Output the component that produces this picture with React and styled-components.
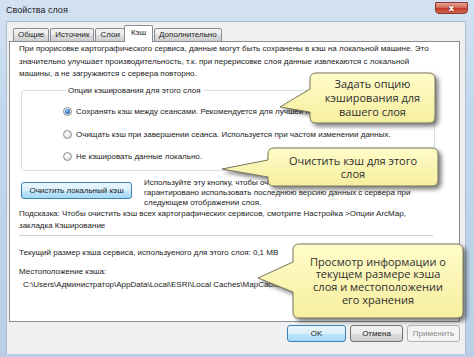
import React from "react";
import styled, { createGlobalStyle } from "styled-components";

const GlobalStyle = createGlobalStyle`
  html, body {
    margin: 0;
    padding: 0;
    background: #ffffff;
  }
  body {
    font-family: "Liberation Sans", Arial, sans-serif;
    color: #222;
  }
`;

const Window = styled.div`
  position: relative;
  width: 474px;
  height: 357px;
  overflow: hidden;
  box-sizing: border-box;
  display: flex;
  flex-direction: column;
  padding: 0 0 3px 6px;
  background: linear-gradient(180deg, #d3e2f2 0%, #c3d7ec 30%, #b9cfe7 100%);
`;

const TitleBar = styled.div`
  height: 21px;
  display: flex;
  justify-content: space-between;
  align-items: flex-start;
`;

const Title = styled.div`
  font-size: 9px;
  line-height: 9px;
  margin-top: 6px;
  color: #1b1b1b;
`;

const CloseButton = styled.div`
  width: 33px;
  height: 12px;
  margin-top: 2px;
  margin-right: 6px;
  box-sizing: border-box;
  border: 1px solid #8a3a30;
  border-radius: 0 0 4px 4px;
  background: linear-gradient(180deg, #e6a597 0%, #d46a58 45%, #c23d2a 55%, #d2664e 100%);
  color: #fff;
  font-family: "DejaVu Sans", sans-serif;
  font-weight: bold;
  font-size: 9px;
  line-height: 10px;
  text-align: center;
  text-shadow: 0 0 2px #6a1a10;
`;

const Client = styled.div`
  flex: 1;
  width: 460px;
  box-sizing: border-box;
  display: flex;
  flex-direction: column;
  padding: 3px 5px 0 2px;
  background: #f0f0f0;
  border: 1px solid #a9bdd4;
  border-bottom: none;
`;

const TabRow = styled.div`
  display: flex;
  align-items: flex-end;
  height: 17px;
  margin-left: 4px;
  margin-bottom: -1px;
  position: relative;
  z-index: 1;
`;

const Tab = styled.div`
  box-sizing: border-box;
  font-size: 8px;
  padding: 0 ${(p) => (p.$active ? 6 : 4)}px;
  height: ${(p) => (p.$active ? 17 : 14)}px;
  line-height: ${(p) => (p.$active ? 13 : 12)}px;
  margin: 0 ${(p) => (p.$active ? -1 : 1)}px 0 0;
  border: 1px solid #898c95;
  border-bottom: ${(p) => (p.$active ? "none" : "1px solid #898c95")};
  border-radius: 2px 2px 0 0;
  background: ${(p) =>
    p.$active
      ? "#ffffff"
      : "linear-gradient(180deg, #f3f3f3 0%, #ebebeb 50%, #dddddd 51%, #cfcfcf 100%)"};
  color: #222;
  position: relative;
  left: ${(p) => (p.$active ? -2 : 0)}px;
`;

const Panel = styled.div`
  flex: 1;
  background: #ffffff;
  border: 1px solid #898c95;
  padding: 1px 9px 0 9px;
  font-size: 8px;
  display: flex;
  flex-direction: column;
`;

const Para = styled.div`
  line-height: ${(p) => p.$lh || 12}px;
  margin-top: ${(p) => p.$mt || 0}px;
  padding-left: ${(p) => p.$pl || 0}px;
  white-space: nowrap;
`;

const GroupBox = styled.fieldset`
  margin: 5px 0 0 2px;
  width: 414px;
  box-sizing: border-box;
  padding: 5px 0 2px 41px;
  border: 1px solid #d5dfe5;
  border-radius: 3px;
  display: flex;
  flex-direction: column;
`;

const Legend = styled.legend`
  font-size: 8px;
  line-height: 10px;
  padding: 0 2px;
  margin-left: 3px;
`;

const RadioRow = styled.label`
  display: flex;
  align-items: center;
  height: 22.5px;
  gap: 4px;
  white-space: nowrap;
`;

const RadioDot = styled.span`
  width: 9px;
  height: 9px;
  box-sizing: border-box;
  border-radius: 50%;
  border: 1px solid #8e8f8f;
  background: radial-gradient(circle at 40% 35%, #ffffff 0%, #e6e6e6 60%, #cfcfcf 100%);
  display: flex;
  align-items: center;
  justify-content: center;
  flex: none;

  &::after {
    content: "";
    display: ${(p) => (p.$checked ? "block" : "none")};
    width: 5px;
    height: 5px;
    border-radius: 50%;
    background: radial-gradient(circle at 40% 35%, #8ccdf7 0%, #2f78c5 55%, #1a4f96 100%);
  }
`;

const ActionRow = styled.div`
  display: flex;
  align-items: flex-start;
  gap: 12px;
  margin-top: 7px;
  padding-left: 2px;
`;

const Button = styled.div`
  box-sizing: border-box;
  width: ${(p) => p.$w}px;
  height: 17px;
  margin-top: ${(p) => p.$mt || 0}px;
  font-size: 8px;
  line-height: 15px;
  text-align: center;
  border-radius: 3px;
  white-space: nowrap;
  border: 1px solid
    ${(p) => (p.$primary ? "#3c7fb1" : p.$disabled ? "#adb2b5" : "#707070")};
  color: ${(p) => (p.$disabled ? "#8a8a8a" : "#1b1b1b")};
  background: ${(p) =>
    p.$primary
      ? "linear-gradient(180deg, #eaf6fd 0%, #d9f0fc 50%, #bee6fd 51%, #a7d9f5 100%)"
      : p.$disabled
      ? "#f4f4f4"
      : "linear-gradient(180deg, #f2f2f2 0%, #ebebeb 50%, #dddddd 51%, #cfcfcf 100%)"};
`;

const Separator = styled.div`
  width: 414px;
  height: 1px;
  margin-top: 3px;
  background: #cdcdcd;
  border-bottom: 1px solid #ffffff;
`;

const Footer = styled.div`
  height: 32px;
  display: flex;
  justify-content: flex-end;
  align-items: flex-start;
  gap: 4px;
  padding: 3px 0 0 0;
  box-sizing: border-box;
`;

const CalloutBox = styled.div`
  position: absolute;
  left: ${(p) => p.$x}px;
  top: ${(p) => p.$y}px;
  width: ${(p) => p.$w}px;
  height: ${(p) => p.$h}px;
  z-index: 5;
`;

const CalloutShape = styled.svg`
  position: absolute;
  left: 0;
  top: 0;
  overflow: visible;
  filter: drop-shadow(3px 3px 2px rgba(0, 0, 0, 0.5));
`;

const CalloutText = styled.div`
  position: relative;
  height: 100%;
  display: flex;
  align-items: center;
  justify-content: center;
  text-align: center;
  font-family: "Open Sans", "DejaVu Sans", sans-serif;
  font-size: 11px;
  line-height: ${(p) => p.$lh}px;
  color: #2e2e2e;
`;

function Callout({ x, y, w, h, tipX, tipY, b1, b2, lh, children }) {
  const r = 6;
  const tx = tipX - x;
  const ty = tipY - y;
  const p1 = b1 - y;
  const p2 = b2 - y;
  const d = `M ${r} 0 H ${w - r} Q ${w} 0 ${w} ${r} V ${h - r} Q ${w} ${h} ${w - r} ${h} H ${r} Q 0 ${h} 0 ${h - r} V ${p2} L ${tx} ${ty} L 0 ${p1} V ${r} Q 0 0 ${r} 0 Z`;
  const gid = `cg${x}${y}`;
  return (
    <CalloutBox $x={x} $y={y} $w={w} $h={h}>
      <CalloutShape width={w} height={h}>
        <defs>
          <linearGradient id={gid} x1="0" y1="0" x2="0" y2="1">
            <stop offset="0" stopColor="#fffcc9" />
            <stop offset="1" stopColor="#f6ee9f" />
          </linearGradient>
        </defs>
        <path d={d} fill={`url(#${gid})`} stroke="#77765a" strokeWidth="1" />
      </CalloutShape>
      <CalloutText $lh={lh}>{children}</CalloutText>
    </CalloutBox>
  );
}

export default function App() {
  const tabs = ["Общие", "Источник", "Слои", "Кэш", "Дополнительно"];
  return (
    <>
      <GlobalStyle />
      <Window>
        <TitleBar>
          <Title>Свойства слоя</Title>
          <CloseButton>x</CloseButton>
        </TitleBar>
        <Client>
          <TabRow>
            {tabs.map((t) => (
              <Tab key={t} $active={t === "Кэш"}>
                {t}
              </Tab>
            ))}
          </TabRow>
          <Panel>
            <Para $lh={12.5}>
              При прорисовке картографического сервиса, данные могут быть сохранены в кэш на локальной машине. Это
              <br />
              значительно улучшает производительность, т.к. при перерисовке слоя данные извлекаются с локальной
              <br />
              машины, а не загружаются с сервера повторно.
            </Para>
            <GroupBox>
              <Legend>Опции кэширования для этого слоя</Legend>
              <RadioRow>
                <RadioDot $checked />
                Сохранять кэш между сеансами. Рекомендуется для лучшей производительности.
              </RadioRow>
              <RadioRow>
                <RadioDot />
                Очищать кэш при завершении сеанса. Используется при частом изменении данных.
              </RadioRow>
              <RadioRow>
                <RadioDot />
                Не кэшировать данные локально.
              </RadioRow>
            </GroupBox>
            <ActionRow>
              <Button $w={111} $mt={4} $primary>
                Очистить локальный кэш
              </Button>
              <Para $lh={10}>
                Используйте эту кнопку, чтобы очистить кэш и
                <br />
                гарантировано использовать последнюю версию данных с сервера при
                <br />
                следующем отображении слоя.
              </Para>
            </ActionRow>
            <Para $lh={12}>
              Подсказка: Чтобы очистить кэш всех картографических сервисов, смотрите Настройка &gt;Опции ArcMap,
              <br />
              закладка Кэширование
            </Para>
            <Separator />
            <Para $mt={10}>Текущий размер кэша сервиса, используеного для этого слоя: 0,1 MB</Para>
            <Para $mt={7}>Местоположение кэша:</Para>
            <Para $mt={1} $pl={4}>
              C:\Users\Администратор\AppData\Local\ESRI\Local Caches\MapCache\Layers
            </Para>
          </Panel>
          <Footer>
            <Button $w={59} $primary>
              OK
            </Button>
            <Button $w={53}>Отмена</Button>
            <Button $w={53} $disabled>
              Применить
            </Button>
          </Footer>
        </Client>

        <Callout x={310} y={73} w={125} h={50} tipX={280} tipY={107} b1={89} b2={112} lh={14}>
          Задать опцию
          <br />
          кэширования для
          <br />
          вашего слоя
        </Callout>
        <Callout x={268} y={148} w={170} h={38} tipX={222} tipY={169} b1={160} b2={177} lh={13}>
          Очистить кэш для этого
          <br />
          слоя
        </Callout>
        <Callout x={293} y={244} w={170} h={74} tipX={258} tipY={278} b1={262} b2={292} lh={12.7}>
          Просмотр информации о
          <br />
          текущем размере кэша
          <br />
          слоя и местоположении
          <br />
          его хранения
        </Callout>
      </Window>
    </>
  );
}
